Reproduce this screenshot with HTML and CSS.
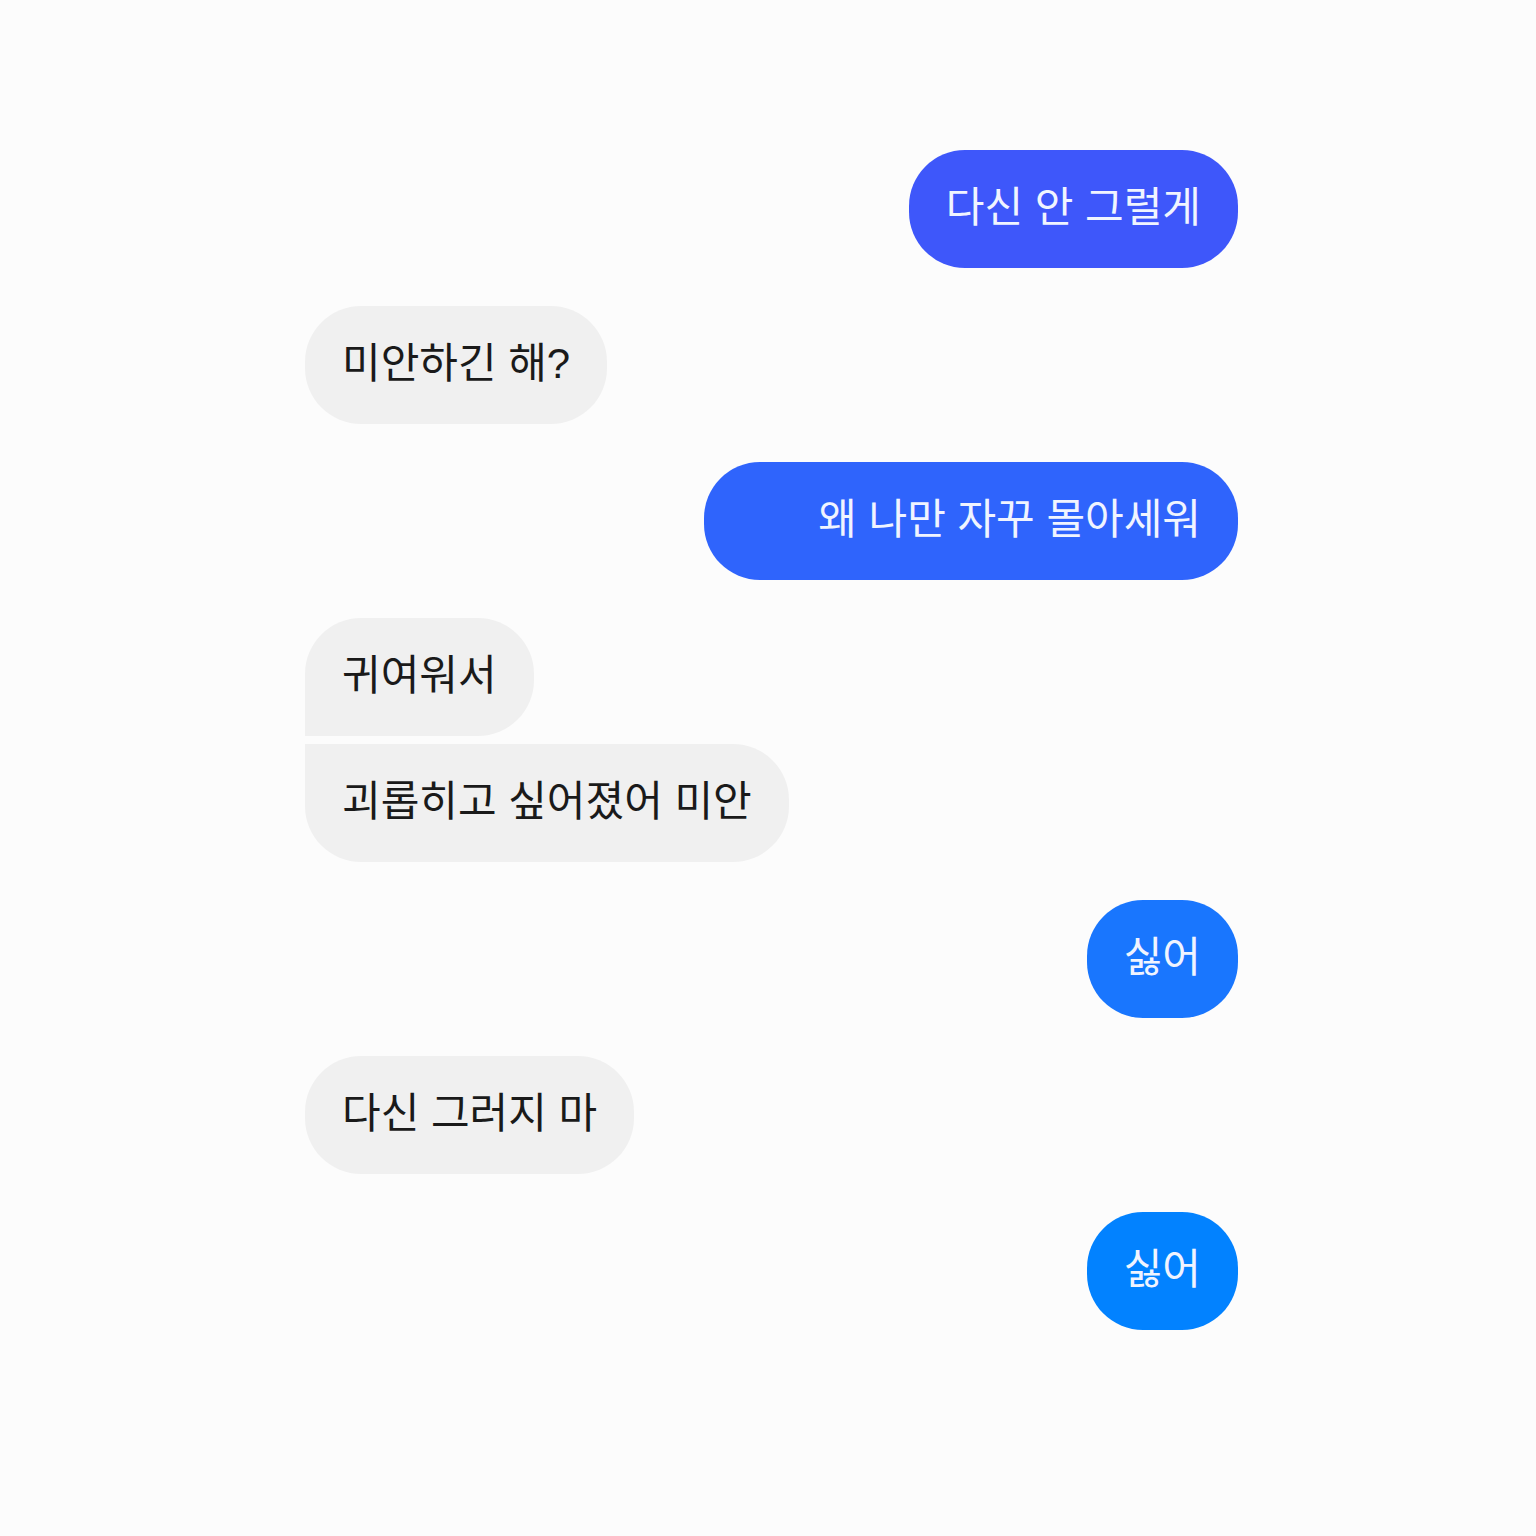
FILE: index.html
```html
<!DOCTYPE html>
<html lang="ko">
<head>
    <meta charset="UTF-8">
    <meta name="viewport" content="width=device-width, initial-scale=1.0">
    <title>메시지</title>
    <link rel="stylesheet" href="styles.css">
</head>
<body>
    <main class="chat">
        <div class="group sent">
            <p class="bubble indigo">다신 안 그럴게</p>
        </div>
        <div class="group received">
            <p class="bubble">미안하긴 해?</p>
        </div>
        <div class="group sent">
            <p class="bubble royal wide">왜 나만 자꾸 몰아세워</p>
        </div>
        <div class="group received">
            <p class="bubble">귀여워서</p>
            <p class="bubble">괴롭히고 싶어졌어 미안</p>
        </div>
        <div class="group sent">
            <p class="bubble blue">싫어</p>
        </div>
        <div class="group received">
            <p class="bubble">다신 그러지 마</p>
        </div>
        <div class="group sent">
            <p class="bubble azure">싫어</p>
        </div>
    </main>
</body>
</html>
```
FILE: styles.css
```css
* {
    box-sizing: border-box;
}
body {
    margin: 0;
    background-color: #fcfcfc;
    font-family: "Liberation Sans", "Noto Sans CJK KR", sans-serif;
    color: #1a1a1a;
}
.chat {
    display: flex;
    flex-direction: column;
    gap: 38px;
    max-width: 940px;
    margin: 0 auto;
    padding: 150px 0 150px 7px;
}
.group {
    display: flex;
    flex-direction: column;
    gap: 8px;
}
.sent {
    align-items: flex-end;
}
.received {
    align-items: flex-start;
}
.bubble {
    margin: 0;
    padding: 28px 37px 30px;
    border-radius: 56px;
    font-size: 42px;
    line-height: 60px;
}
.received .bubble {
    background-color: #f0f0f0;
}
/* Consecutive messages are joined on the left side */
.received .bubble:not(:last-child) {
    border-bottom-left-radius: 0;
}
.received .bubble:not(:first-child) {
    border-top-left-radius: 0;
}
.sent .bubble {
    color: #f0f4ff;
}
.sent .wide {
    padding-left: 114px;
}
/* Sent bubbles get lighter going down the page */
.indigo {
    background-color: #3e57fa;
}
.royal {
    background-color: #2f64fc;
}
.blue {
    background-color: #1976fe;
}
.azure {
    background-color: #0282ff;
}
```
